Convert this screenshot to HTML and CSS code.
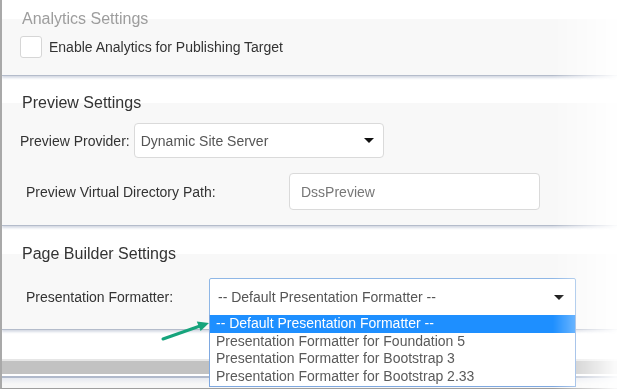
FILE: index.html
```html
<!DOCTYPE html>
<html lang="en">
<head>
  <meta charset="UTF-8">
  <meta name="viewport" content="width=device-width, initial-scale=1.0">
  <title>Publishing Target Settings</title>
  <link rel="stylesheet" href="styles.css">
</head>
<body>

  <div class="sheet">

    <section class="panel panel-analytics">
      <h2 class="panel-title muted">Analytics Settings</h2>
      <label class="check-row">
        <span class="checkbox"></span>
        Enable Analytics for Publishing Target
      </label>
    </section>

    <section class="panel panel-preview">
      <h2 class="panel-title">Preview Settings</h2>
      <div class="field-row">
        <span class="field-label">Preview Provider:</span>
        <div class="select select-provider">Dynamic Site Server<span class="caret"></span></div>
      </div>
      <div class="field-row indented">
        <span class="field-label label-path">Preview Virtual Directory Path:</span>
        <div class="text-input">DssPreview</div>
      </div>
    </section>

    <section class="panel panel-builder">
      <h2 class="panel-title">Page Builder Settings</h2>
      <div class="field-row indented">
        <span class="field-label label-formatter">Presentation Formatter:</span>
        <div class="select select-open">
          -- Default Presentation Formatter --<span class="caret"></span>
          <ul class="options">
            <li class="option active">-- Default Presentation Formatter --</li>
            <li class="option">Presentation Formatter for Foundation 5</li>
            <li class="option">Presentation Formatter for Bootstrap 3</li>
            <li class="option">Presentation Formatter for Bootstrap 2.33</li>
          </ul>
        </div>
      </div>
    </section>

    <div class="gray-bar"></div>
    <div class="bottom-panel"></div>

    <!-- callout arrow pointing at the default option -->
    <svg class="callout" width="56" height="28" viewBox="0 0 56 28">
      <line x1="5" y1="23" x2="42" y2="10" stroke="#16a47c" stroke-width="3" stroke-linecap="round"/>
      <polygon points="51,7 42.6,15 38.8,5.6" fill="#16a47c"/>
    </svg>

  </div>

</body>
</html>
```

FILE: styles.css
```css
body {
  margin: 0;
  background-color: #fff;
  font-family: "Liberation Sans", Arial, sans-serif;
  color: #333;
}

.sheet {
  position: relative;
  height: 389px;
  box-sizing: border-box;
  border-left: 2px solid #a9a9a9;
  border-bottom: 1px solid #9e9e9e;
  overflow: hidden;
  display: flex;
  flex-direction: column;
  /* the screenshot fades out to the right */
  -webkit-mask-image: linear-gradient(to right, #000 553px, rgba(0, 0, 0, 0.08) 615px);
  mask-image: linear-gradient(to right, #000 553px, rgba(0, 0, 0, 0.08) 615px);
}

.panel {
  position: relative;
  flex: none;
  padding: 13px 0 0 18px;
  background: linear-gradient(#fff 23px, #f8f8f8 23px);
  border-bottom: 1px solid #b4bccb;
  box-shadow: 0 2px 2px rgba(140, 152, 180, 0.35);
}

.panel-analytics {
  margin-top: -4px;
  padding-bottom: 17px;
}

.panel-preview {
  margin-top: 4px;
  padding-bottom: 15px;
}

.panel-builder {
  margin-top: 5px;
  padding-bottom: 13px;
  z-index: 2;
}

.panel-title {
  margin: 0 0 0 2px;
  font-size: 16px;
  font-weight: normal;
  line-height: 20px;
  color: #333;
}

.panel-title.muted {
  color: #9d9d9d;
}

.check-row {
  display: flex;
  align-items: center;
  margin-top: 7px;
  font-size: 14px;
  color: #333;
}

.checkbox {
  width: 22px;
  height: 22px;
  box-sizing: border-box;
  border: 1px solid #d6d6d6;
  border-radius: 3px;
  background-color: #fff;
  margin-right: 7px;
}

.field-row {
  display: flex;
  align-items: center;
  margin-top: 10px;
  font-size: 14px;
}

.panel-preview .indented {
  margin-top: 15px;
}

.panel-builder .field-row {
  margin-top: 14px;
}

.indented {
  padding-left: 6px;
}

.field-label {
  flex: none;
  color: #333;
}

.label-path {
  width: 263px;
}

.label-formatter {
  width: 183px;
}

.select {
  position: relative;
  display: flex;
  align-items: center;
  box-sizing: border-box;
  background-color: #fff;
  color: #555;
  font-size: 14px;
}

.select-provider {
  width: 250px;
  height: 35px;
  margin-left: 4px;
  padding-left: 6px;
  border: 1px solid #dadada;
  border-radius: 4px;
}

.select-open {
  width: 367px;
  height: 38px;
  padding-left: 8px;
  border: 1px solid #8fb7e6;
  border-radius: 2px 2px 0 0;
}

.caret {
  margin-left: auto;
  margin-right: 9px;
  width: 0;
  height: 0;
  border-left: 5px solid transparent;
  border-right: 5px solid transparent;
  border-top: 5px solid #111;
}

.select-open .caret {
  margin-right: 11px;
}

.text-input {
  display: flex;
  align-items: center;
  width: 251px;
  height: 37px;
  box-sizing: border-box;
  padding-left: 11px;
  border: 1px solid #dadada;
  border-radius: 4px;
  background-color: #fff;
  color: #777;
  font-size: 14px;
}

.options {
  position: absolute;
  top: 100%;
  left: -1px;
  right: -1px;
  margin: 0;
  padding: 0 0 1px;
  list-style: none;
  background-color: #fff;
  border: 1px solid #7ea8e0;
  border-top: none;
}

.option {
  padding-left: 6px;
  line-height: 17.5px;
  color: #5a5a5a;
  white-space: nowrap;
}

.option.active {
  background-color: #1e8fff;
  color: #fff;
}

.gray-bar {
  flex: none;
  margin-top: 29px;
  height: 13px;
  border-top: 2px solid #e6e6e6;
  background-color: #c2c2c2;
}

.bottom-panel {
  flex: 1;
  margin-top: 2px;
  border-top: 2px solid #b0b9cb;
  background: linear-gradient(#e6e9f0, #f7f7f7 6px);
}

.callout {
  position: absolute;
  left: 156px;
  top: 316px;
  z-index: 3;
}
```
